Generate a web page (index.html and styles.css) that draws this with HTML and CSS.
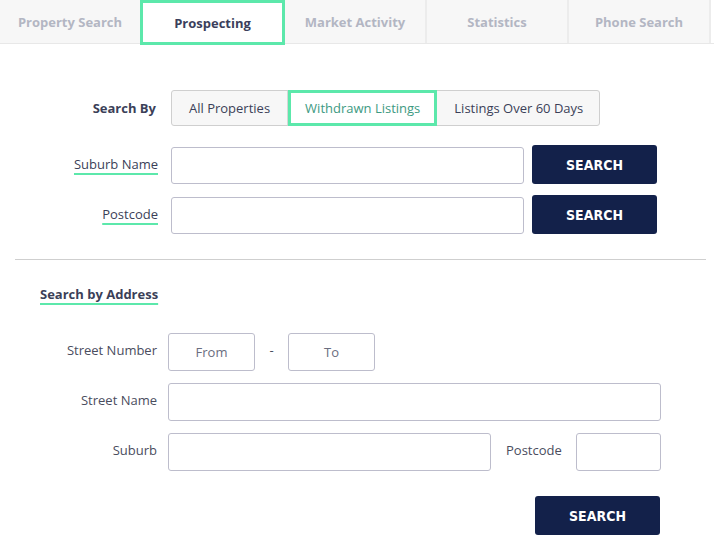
FILE: index.html
```html
<!DOCTYPE html>
<html lang="en">
<head>
  <meta charset="UTF-8">
  <meta name="viewport" content="width=device-width, initial-scale=1.0">
  <title>Prospecting</title>
  <link rel="stylesheet" href="styles.css">
</head>
<body>
  <!-- Tabs -->
  <nav class="tabs">
    <a class="tab tab-first">Property Search</a>
    <a class="tab active">Prospecting</a>
    <a class="tab">Market Activity</a>
    <a class="tab">Statistics</a>
    <a class="tab">Phone Search</a>
  </nav>

  <div class="panel">
    <!-- Quick search -->
    <div class="quick">
      <div class="row row-by">
        <span class="label label-strong">Search By</span>
        <div class="seg">
          <button class="seg-btn">All Properties</button>
          <button class="seg-btn selected">Withdrawn Listings</button>
          <button class="seg-btn">Listings Over 60 Days</button>
        </div>
      </div>
      <div class="row row-field">
        <span class="label"><u>Suburb Name</u></span>
        <input type="text" class="input input-wide">
        <button class="btn-search">SEARCH</button>
      </div>
      <div class="row row-field">
        <span class="label"><u>Postcode</u></span>
        <input type="text" class="input input-wide">
        <button class="btn-search">SEARCH</button>
      </div>
    </div>

    <hr class="divider">

    <!-- Address search -->
    <div class="address">
      <h3 class="section-title"><u>Search by Address</u></h3>
      <div class="addr-row">
        <span class="addr-label">Street Number</span>
        <input type="text" class="input input-num" placeholder="From">
        <span class="dash">-</span>
        <input type="text" class="input input-num" placeholder="To">
      </div>
      <div class="addr-row">
        <span class="addr-label">Street Name</span>
        <input type="text" class="input input-street">
      </div>
      <div class="addr-row">
        <span class="addr-label">Suburb</span>
        <input type="text" class="input input-suburb">
        <span class="addr-label-inline">Postcode</span>
        <input type="text" class="input input-pc">
      </div>
      <div class="addr-actions">
        <button class="btn-search">SEARCH</button>
      </div>
    </div>
  </div>
</body>
</html>
```

FILE: styles.css
```css
body {
  font-family: 'Open Sans', sans-serif;
  font-size: 13px;
  margin: 0;
  background: #fff;
  color: #3b3f58;
}
.tabs {
  display: flex;
  height: 43px;
  border-bottom: 1px solid #e8e8e8;
  background: #fff;
}
.tab {
  box-sizing: border-box;
  width: 142px;
  height: 43px;
  display: flex;
  align-items: center;
  justify-content: center;
  background: #f7f7f7;
  border-right: 2px solid #ececec;
  color: #b3b6c3;
  font-weight: 700;
  font-size: 13px;
}
.tab-first {
  width: 140px;
  border-right: none;
}
.tab.active {
  width: 145px;
  height: 45px;
  background: #fff;
  border: 3px solid #5ce8ab;
  color: #3b3f5c;
}
.panel {
  padding-top: 46px;
}
.quick {
  display: flex;
  flex-direction: column;
}
.row {
  display: flex;
  align-items: center;
}
.row-field {
  align-items: flex-end;
  height: 39px;
  margin-top: 11px;
}
.row-by + .row-field {
  margin-top: 19px;
}
.label {
  width: 158px;
  text-align: right;
  margin-right: 13px;
  color: #3b3f58;
  align-self: center;
  margin-top: -2px;
}
.label u,
.section-title u {
  text-decoration: underline 2px #5ce8ab;
  text-underline-offset: 4px;
}
.label-strong {
  width: 156px;
  margin-right: 15px;
  margin-top: 0;
  font-weight: 700;
}
.seg {
  display: flex;
  height: 34px;
  border: 1px solid #cfcfcf;
  border-radius: 3px;
  background: #f7f7f7;
}
.seg-btn {
  font-family: inherit;
  font-size: 13px;
  color: #3b3f58;
  background: transparent;
  border: none;
  border-right: 1px solid #d6d6d6;
  padding: 0 17px;
}
.seg-btn:last-child {
  border-right: none;
  padding-right: 16px;
}
.seg-btn.selected {
  background: #fff;
  color: #3d9a82;
  border: 3px solid #5ce8ab;
  margin: -1px 0;
  padding: 0 14px;
}
.input {
  box-sizing: border-box;
  height: 38px;
  border: 1px solid #bdbdcc;
  border-radius: 3px;
  font-family: inherit;
  font-size: 13px;
  color: #3b3f58;
  background: #fff;
  padding: 0 10px;
}
.input::placeholder {
  color: #6a6d80;
  text-align: center;
}
.input-wide {
  width: 353px;
  height: 37px;
  margin-right: 8px;
}
.btn-search {
  width: 125px;
  height: 39px;
  background: #13214a;
  color: #fff;
  border: none;
  border-radius: 3px;
  font-family: 'DejaVu Sans Condensed', 'DejaVu Sans', sans-serif;
  font-weight: 700;
  font-size: 14px;
}
.divider {
  border: none;
  border-top: 1px solid #cfcfcf;
  margin: 25px 8px 0 15px;
}
.address {
  padding-top: 25px;
}
.section-title {
  margin: 0 0 30px 40px;
  font-size: 13px;
  font-weight: 700;
  color: #3b3f58;
}
.addr-row {
  display: flex;
  align-items: center;
  margin-bottom: 12px;
}
.addr-label {
  width: 157px;
  text-align: right;
  margin-right: 11px;
  color: #4a4d5e;
  margin-top: -4px;
}
.addr-label-inline {
  margin: -4px 14px 0 15px;
  color: #4a4d5e;
}
.input-num {
  width: 87px;
  text-align: center;
}
.dash {
  width: 33px;
  text-align: center;
  color: #4a4d5e;
  margin-top: -4px;
}
.input-street {
  width: 493px;
}
.input-suburb {
  width: 323px;
}
.input-pc {
  width: 85px;
}
.addr-actions {
  display: flex;
  justify-content: flex-end;
  width: 660px;
  margin-top: 25px;
}
```
